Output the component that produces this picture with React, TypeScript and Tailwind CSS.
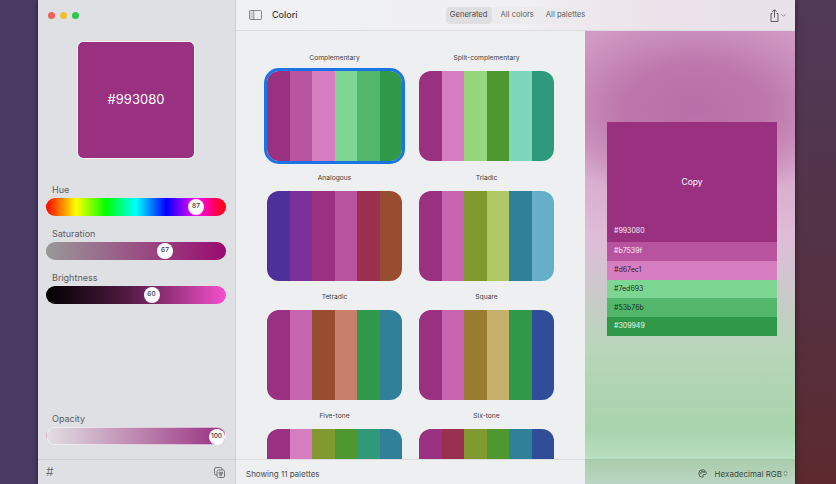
import { ChevronDown, ChevronsUpDown } from "lucide-react";

const font = { fontFamily: "Inter, 'Liberation Sans', sans-serif" };

type Palette = { name: string; colors: string[]; selected?: boolean };

const palettes: Palette[] = [
  { name: "Complementary", colors: ["#993080", "#b7539f", "#d67ec1", "#7ed693", "#53b76b", "#309949"], selected: true },
  { name: "Split-complementary", colors: ["#993080", "#d67ec1", "#98d67e", "#4d9930", "#7ed6bb", "#30997c"] },
  { name: "Analogous", colors: ["#4d3099", "#7c3099", "#993080", "#b7539f", "#993050", "#994d30"] },
  { name: "Triadic", colors: ["#993080", "#c765b0", "#80992f", "#b0c765", "#30809a", "#65b0c8"] },
  { name: "Tetradic", colors: ["#993080", "#c765b0", "#994d30", "#c7816a", "#309949", "#30809a"] },
  { name: "Square", colors: ["#993080", "#c765b0", "#997c30", "#c7b06a", "#309949", "#304d99"] },
  { name: "Five-tone", colors: ["#993080", "#d67ec1", "#80992f", "#4d9930", "#30997c", "#30809a"] },
  { name: "Six-tone", colors: ["#993080", "#993050", "#80992f", "#4d9930", "#30809a", "#304d99"] },
];

const swatches = [
  { hex: "#b7539f", label: "#b7539f", text: "text-white/90" },
  { hex: "#d67ec1", label: "#d67ec1", text: "text-black/80" },
  { hex: "#7ed693", label: "#7ed693", text: "text-black/80" },
  { hex: "#53b76b", label: "#53b76b", text: "text-black/80" },
  { hex: "#309949", label: "#309949", text: "text-white/90" },
];

function Slider({ label, value, left, className, top }: { label: string; value: number; left: number; className: string; top: string }) {
  return (
    <div className={top}>
      <div className="pl-[6px] text-[9px] leading-[12px] text-[#5c5d61]">{label}</div>
      <div className={`relative mt-[2px] h-[17.5px] rounded-full ${className}`}>
        <div
          className="absolute top-[0.75px] flex h-[16px] w-[16px] items-center justify-center rounded-full bg-white text-[6.5px] font-medium text-[#333]"
          style={{ left }}
        >
          {value}
        </div>
      </div>
    </div>
  );
}

function PaletteCard({ palette }: { palette: Palette }) {
  return (
    <div className="flex flex-col items-center">
      <div className="mb-[7px] h-[12px] text-[6.7px] leading-[12px] text-[#3c3d40]">{palette.name}</div>
      <div
        className={`flex h-[90px] w-[135px] shrink-0 overflow-hidden rounded-[12px] ${
          palette.selected ? "outline-[3px] outline-offset-0 outline-[#1b74e4]" : ""
        }`}
      >
        {palette.colors.map((c, i) => (
          <div key={i} className="flex-1" style={{ backgroundColor: c }} />
        ))}
      </div>
    </div>
  );
}

export default function App() {
  return (
    <div className="flex h-[484px] w-[836px] overflow-hidden bg-[#4a3a64]" style={font}>
      <div className="w-[38px] shrink-0 bg-[#4a3a64]" />

      <div className="relative z-10 flex w-[757px] shrink-0 shadow-[0_0_5px_rgba(0,0,0,0.55)]">
        {/* Sidebar */}
        <aside className="flex w-[198px] shrink-0 flex-col border-r border-[#cfd0d3] bg-[#dfe0e3]">
          <div className="flex h-[30px] shrink-0 items-center gap-[5px] pl-[10px]">
            <span className="h-[7px] w-[7px] rounded-full bg-[#f2605a]" />
            <span className="h-[7px] w-[7px] rounded-full bg-[#f5bd30]" />
            <span className="h-[7px] w-[7px] rounded-full bg-[#2fc843]" />
          </div>
          <div className="flex-1 pl-[8px] pr-[9px]">
            <div className="mx-auto mt-[11px] flex h-[118px] w-[118px] items-center justify-center rounded-[6px] border border-white/70 bg-[#993080] bg-clip-padding text-[13px] text-white">
              #993080
            </div>
            <Slider
              label="Hue"
              value={87}
              left={142}
              top="mt-[25px]"
              className="bg-[linear-gradient(90deg,#ff0000,#ffff00,#00ff00,#00ffff,#0000ff,#ff00ff,#ff0000)]"
            />
            <Slider
              label="Saturation"
              value={67}
              left={111}
              top="mt-[12.5px]"
              className="bg-[linear-gradient(90deg,#999999,#990a70)]"
            />
            <Slider
              label="Brightness"
              value={60}
              left={97.5}
              top="mt-[12.5px]"
              className="bg-[linear-gradient(90deg,#000000,#501a42_45%,#f550cc)]"
            />
            <Slider
              label="Opacity"
              value={100}
              left={161.5}
              top="mt-[109.5px]"
              className="border border-white/60 bg-[linear-gradient(90deg,#e2dfe3,#993080)]"
            />
          </div>
          <div className="flex h-[25px] shrink-0 items-center justify-between border-t border-[#cfd0d3] pl-[8px] pr-[10px] text-[#5c5d60]">
            <span className="text-[12px] font-light leading-none">#</span>
            <svg width="11" height="11" viewBox="0 0 11 11" fill="none" stroke="currentColor" strokeWidth="0.8">
              <rect x="0.5" y="0.5" width="7.5" height="7.5" rx="1.5" />
              <rect x="3" y="3" width="7.5" height="7.5" rx="1.5" fill="#dfe0e3" />
              <circle cx="5.6" cy="6" r="0.9" />
              <circle cx="7.9" cy="6" r="0.9" />
              <circle cx="6.7" cy="8" r="0.9" />
            </svg>
          </div>
        </aside>

        <div className="flex min-w-0 flex-1 flex-col">
          {/* Toolbar */}
          <header className="flex h-[31px] shrink-0 items-center border-b border-[#dcdcdf] bg-[linear-gradient(90deg,#f0f1f3_0%,#f0f0f2_50%,#ebe2ea_75%,#e9e2ea_100%)] pl-[13px] pr-[8px]">
            <svg width="13" height="10" viewBox="0 0 13 10" fill="none" className="text-[#6a6a6e]">
              <rect x="0.5" y="0.5" width="12" height="9" rx="1.2" stroke="currentColor" strokeWidth="0.8" />
              <rect x="1.2" y="1.2" width="3.4" height="7.6" fill="#cfcfd2" />
              <path d="M4.8 0.5v9" stroke="currentColor" strokeWidth="0.7" />
            </svg>
            <span className="ml-[10px] text-[9px] font-medium text-[#3a3a3d]">Colori</span>
            <div className="ml-[148px] flex h-[17px] items-center rounded-[4px] bg-[#e9e9eb]/60 text-[7.6px] text-[#616165]">
              <span className="flex h-full w-[46px] items-center justify-center rounded-[4px] bg-[#dfdfe2] text-[#4a4a4d]">Generated</span>
              <span className="ml-[9px]">All colors</span>
              <span className="ml-[12px] pr-[2px]">All palettes</span>
            </div>
            <div className="ml-auto flex items-center gap-[1px] text-[#4f5054]">
              <svg width="9" height="13" viewBox="0 0 9 13" fill="none" stroke="currentColor" strokeWidth="0.9">
                <path d="M2.5 4.5H1v8h7v-8H6.5" />
                <path d="M4.5 8.5V0.8M2.4 2.8l2.1-2.1 2.1 2.1" />
              </svg>
              <ChevronDown size={7} strokeWidth={2} />
            </div>
          </header>

          <div className="flex min-h-0 flex-1">
            {/* Palettes */}
            <main className="w-[349px] min-w-0 shrink-0 overflow-hidden bg-[#eeeff1] pl-[31px] pr-[30px] pt-[21.4px]">
              <div className="grid grid-cols-[135px_135px] gap-x-[17px] gap-y-[10.3px]">
                {palettes.map((p) => (
                  <PaletteCard key={p.name} palette={p} />
                ))}
              </div>
            </main>

            {/* Preview */}
            <section className="flex flex-1 flex-col items-center bg-[radial-gradient(ellipse_155px_95px_at_52%_78px,#b970a8_0%,#bc76ab_45%,rgba(190,125,175,0)_100%),linear-gradient(180deg,#d09ac4_0%,#d3a3c8_25%,#dfbcd8_48%,#cfc6cd_58%,#b8d5ba_74%,#a8d4ac_93%,#b8dfc1_100%)] pl-[4px] pt-[91px]">
              <div className="flex w-[170px] flex-col">
                <div className="relative flex h-[120px] items-center justify-center bg-[#993080] text-[8.5px] text-white">
                  Copy
                  <span className="absolute bottom-[6px] left-[7px] text-[7px] leading-[10px] text-white/90">#993080</span>
                </div>
                {swatches.map((s) => (
                  <div
                    key={s.hex}
                    className={`flex h-[18.8px] items-center pl-[7px] text-[7px] ${s.text}`}
                    style={{ backgroundColor: s.hex }}
                  >
                    {s.label}
                  </div>
                ))}
              </div>
            </section>
          </div>

          {/* Status bar */}
          <footer className="flex h-[25px] shrink-0">
            <div className="flex w-[349px] shrink-0 items-center border-t border-[#dcdcdf] bg-[#eeeff1] pl-[10px] pt-[3px] text-[8px] text-[#4a4a4d]">
              Showing 11 palettes
            </div>
            <div className="flex flex-1 items-center justify-end border-t border-[#a8c9aa] bg-[linear-gradient(180deg,#a9cdab,#bcd6c4)] pr-[6px] pt-[3px] text-[8px] text-[#3a4a40]">
              <svg width="9" height="9" viewBox="0 0 24 24" fill="none" stroke="currentColor" strokeWidth="2.2" className="mr-[8px]">
                <path d="M12 2a10 10 0 1 0 0 20c1.5 0 2-1 2-2 0-1.5-1-2-1-3s1-2 2-2h3c2.5 0 4-2 4-4 0-5-4.5-9-10-9z" />
                <circle cx="7.5" cy="11" r="1.5" />
                <circle cx="11" cy="7" r="1.5" />
                <circle cx="16" cy="8" r="1.5" />
              </svg>
              <span>Hexadecimal RGB</span>
              <ChevronsUpDown size={7} strokeWidth={2} />
            </div>
          </footer>
        </div>
      </div>

      <div className="flex-1 bg-[linear-gradient(180deg,#503a58_0%,#533346_50%,#5c2a2e_100%)]" />
    </div>
  );
}
